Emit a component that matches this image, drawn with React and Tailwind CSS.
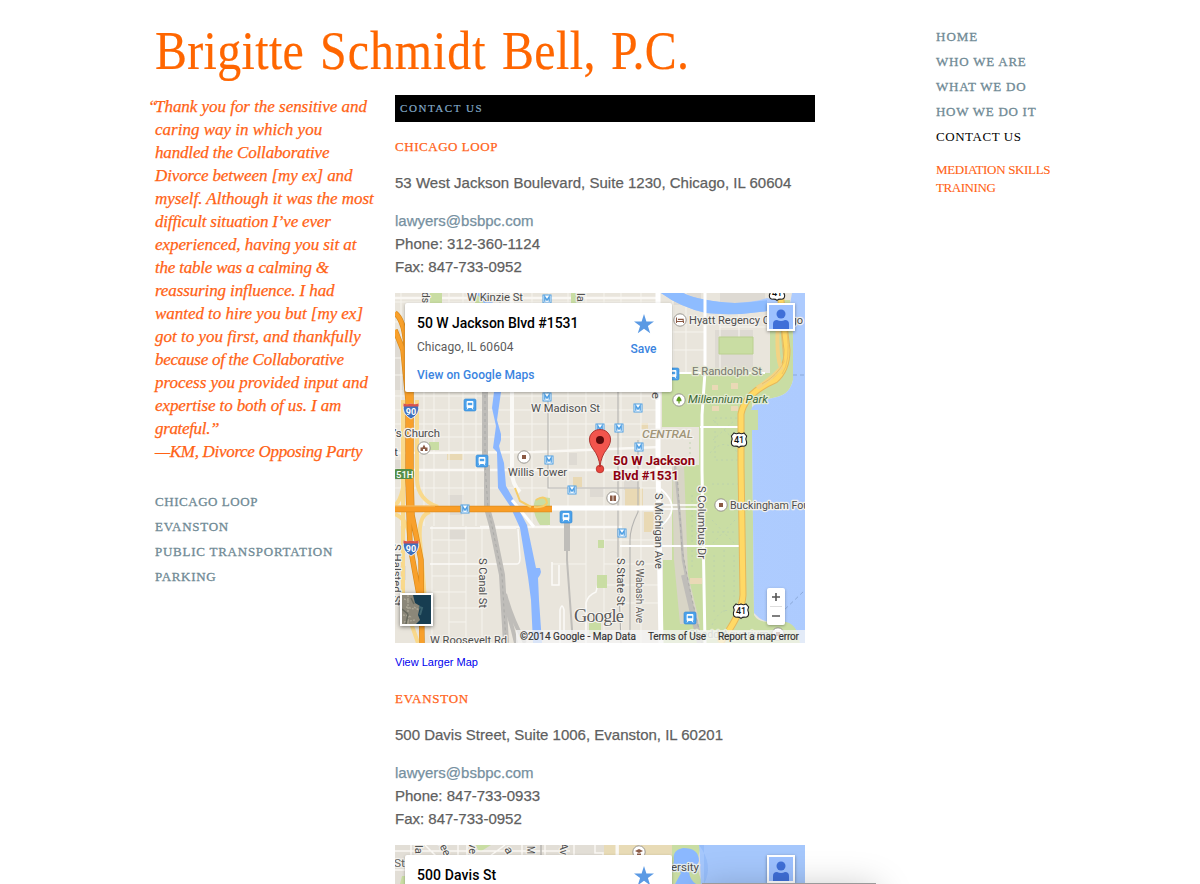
import React, { useLayoutEffect, useRef } from "react";

// Spreads the letters of one line so that it takes the given width.
function Fit({ w, className = "", children }) {
  const ref = useRef(null);
  useLayoutEffect(() => {
    const el = ref.current;
    el.style.letterSpacing = "0px";
    const natural = el.offsetWidth;
    el.style.letterSpacing = (w - natural) / (children.length - 1) + "px";
  }, [w, children]);
  return (
    <span ref={ref} className={"inline-block whitespace-nowrap [font-variant-ligatures:none] " + className}>
      {children}
    </span>
  );
}

const quote = [
  ["Thank you for the sensitive and", 212],
  ["caring way in which you", 167],
  ["handled the Collaborative", 174],
  ["Divorce between [my ex] and", 197],
  ["myself. Although it was the most", 219],
  ["difficult situation I’ve ever", 176],
  ["experienced, having you sit at", 201],
  ["the table was a calming &", 174],
  ["reassuring influence. I had", 180],
  ["wanted to hire you but [my ex]", 208],
  ["got to you first, and thankfully", 206],
  ["because of the Collaborative", 189],
  ["process you provided input and", 213],
  ["expertise to both of us. I am", 186],
  ["grateful.”", 65],
  ["—KM, Divorce Opposing Party", 208],
];

const SERIF = "font-['Liberation_Serif',serif]";

function Label({ x, y, w, children, size = 11, fill = "#4d4d4d", rotate, italic, bold, medium, halo = "#f3f1ec" }) {
  return (
    <text
      x={x}
      y={y}
      textLength={w}
      lengthAdjust="spacingAndGlyphs"
      fontFamily="Roboto, sans-serif"
      fontSize={size}
      fontStyle={italic ? "italic" : "normal"}
      fontWeight={bold ? 700 : medium ? 500 : 400}
      fill={fill}
      stroke={halo}
      strokeWidth="2.5"
      strokeLinejoin="round"
      paintOrder="stroke"
      transform={rotate ? `rotate(${rotate} ${x} ${y})` : undefined}
    >
      {children}
    </text>
  );
}

function Metro({ x, y }) {
  return (
    <g transform={`translate(${x} ${y})`}>
      <rect x="-4" y="-4" width="8" height="8" fill="#fff" stroke="#4f9fe2" strokeWidth="1" />
      <path d="M-2.2 2.700V-2.200L0 1.200 2.200-2.200V2.700" fill="none" stroke="#4f9fe2" strokeWidth="1.3" />
    </g>
  );
}

function Train({ x, y }) {
  return (
    <g transform={`translate(${x} ${y})`}>
      <rect x="-6" y="-6" width="12" height="12" rx="1.5" fill="#4ba1ea" stroke="#3488d4" strokeWidth=".6" />
      <rect x="-3.4" y="-4" width="6.8" height="7" rx="1" fill="#fff" />
      <rect x="-2.2" y="-2.2" width="4.4" height="2.4" fill="#4ba1ea" />
      <path d="M-3 4.4l1-1.4M3 4.4l-1-1.4" stroke="#fff" />
    </g>
  );
}

function Poi({ x, y, children }) {
  return (
    <g transform={`translate(${x} ${y})`}>
      <circle r="6.2" fill="#fff" stroke="#8f8b85" strokeWidth=".9" />
      {children || <rect x="-2" y="-2" width="4" height="4" fill="#8b5b46" />}
    </g>
  );
}

function Interstate({ x, y }) {
  return (
    <g transform={`translate(${x} ${y})`}>
      <path d="M-7.5-6.5Q-4-5 0-7 4-5 7.5-6.5 9.5 3 0 8-9.5 3-7.5-6.5Z" fill="#3f70bd" stroke="#fff" strokeWidth=".8" />
      <path d="M-7.5-7.5Q-4-6 0-7.5 4-6 7.5-7.5L7.6-4.6H-7.6Z" fill="#d9534c" />
      <text y="4" textAnchor="middle" fontFamily="Roboto, sans-serif" fontWeight="700" fontSize="9" fill="#fff">90</text>
    </g>
  );
}

function Route({ x, y }) {
  return (
    <g transform={`translate(${x} ${y})`}>
      <path d="M-5-7Q-2.5-5.6 0-7 2.5-5.6 5-7L7.6-4Q6-1 7.6 2 8 6 4 6.2 1.5 6 0 7.4-1.5 6-4 6.2-8 6-7.6 2-6-1-7.6-4Z" fill="#fff" stroke="#222" strokeWidth="1.1" />
      <text y="3.4" textAnchor="middle" fontFamily="Roboto, sans-serif" fontWeight="500" fontSize="9" fill="#111">41</text>
    </g>
  );
}

const minorX = [401, 424, 434, 449, 463, 476, 532, 549, 568, 586, 604, 621, 641];
const minorY = [302, 322, 340, 358, 375, 396, 410, 424, 437, 488];

function LoopMap() {
  return (
    <svg className="block" width="410" height="350" viewBox="395 293 410 350">
      <defs>
        <linearGradient id="lake" x1="0" x2="1" y1="0.5" y2="0.4">
          <stop offset="0" stopColor="#9dc1fd" />
          <stop offset=".5" stopColor="#aeccff" />
          <stop offset="1" stopColor="#adcbfe" />
        </linearGradient>
      </defs>
      <rect x="395" y="293" width="410" height="350" fill="#e9e5dc" />
      <g fill="#dedad3">
        <path d="M395 330h8v60h-8zM395 460h9v20h-9zM448 495h16v20h-16zM449 530h16v10h-16zM624 478h14v12h-14zM715 330h38v42h-38zM569 453h8v12h-8zM590 488h14v9h-14zM673 293h28v12h-28zM720 293h45v10h-45zM395 566h11v14h-11z" />
      </g>
      <path d="M447 454h16v6h-16zM573 477h9v10h-9zM641 423h7v6h-7zM625 488h18v18h-18zM644 512h13v20h-13z" fill="#e9d9b4" />
      <g stroke="#f6f4ee" strokeWidth="1" fill="none">
        {minorX.map((x) => <path key={x} d={`M${x} 293V526`} />)}
        {minorY.map((y) => <path key={y} d={`M395 ${y}H660`} />)}
        <path d="M449 526V643M466 526V643M432 526V643M482 526V643M586 526V643M604 526V643M621 526V643M641 526V643" />
        <path d="M432 540H466M432 553H466M432 576H482M432 592H466M432 608H482M449 622H466M604 540H660M604 564H660M604 585H660M625 603H660M552 564H586" />
        <path d="M673 293V372M686 293V372M720 312V372M739 312V340" />
        <path d="M660 332H705M660 350H705M720 327H770" />
      </g>
      <path d="M430 528H516M430 564H517Q520 564 520 558L518 529M552 562V585H559V565M560 643V610Q562 602 564 610V640M586 643V603Q588 595 596 592L600 576" fill="none" stroke="#fbfaf7" strokeWidth="1.5" />
      <path d="M395 453 535 452 660 447M395 470H742M480 527H622M395 298H660" stroke="#faf8f4" strokeWidth="2.4" fill="none" />
      <g stroke="#b5b4b1" strokeWidth="1.1" fill="none">
        <path d="M548 385V488H640M618 385V560L621 643M638 440V512Q630 528 630 540V640M500 293V380" />
      </g>

      <path d="M662 373H770V300H790Q795 340 793 380Q790 394 777 397L752 403V410H758V430H752L754 615Q760 625 775 620Q797 615 800 643H663V560H672V480H682V465H699V427H662Z" fill="#c9dda3" />
      <path d="M719 337H753V354H719Z" fill="#c9dda3" stroke="#bad08f" />
      <path d="M535 500Q539 496 550 498V525H540Q531 512 535 500ZM429 442h10v8h-10zM597 575h10v13h-10zM598 540h6v8h-6zM589 622h12v12h-12zM430 293h12v11h-12zM475 293h8v12h-8zM571 293h10v10h-10z" fill="#c9dda3" />
      <path d="M672 465H684L688 575 700 624H680L674 560Z" fill="#d8d5c6" />
      <g fill="#ead9b6"><path d="M712 385h6v5h-6zM731 383h7v6h-7zM712 406h7v5h-7zM731 406h7v5h-7zM690 578h12v6h-12z" /></g>
      <g fill="none" stroke="#bbd1ad" strokeDasharray="2 3" strokeWidth=".9">
        <path d="M713 440 735 420M713 420 735 440M710 453Q724 436 738 453M712 520 735 544M735 520 712 544M712 532H736M712 625Q724 600 738 618M712 484H738M724 550V615M690 432V460M692 495V570M714 555V615M734 555V615M715 418H738V460H715Z" />
      </g>

      <path d="M805 293V643H800Q797 620 780 622 764 625 754 613L752 430H758V410H751Q752 402 777 397 790 394 793 380V330L789 308 767 311Q735 316 706 313 680 307 661 293H683Q700 301 735 303 755 302 767 298L790 304 792 293Z" fill="url(#lake)" />
      <path d="M661 293H683Q700 301 735 303 755 302 767 300V311Q735 316 706 313 680 307 661 293Z" fill="#8ebcff" />
      <path d="M780 614 805 590M793 375H805" stroke="#8ba9d8" strokeDasharray="4 3" />
      <path d="M474 293Q485 298 489 320L494 392 492 408 496 426 493 448 497 452 498 488 510 506 520 528 528 577 531 600 533 643H542L539 600 538 578 540 575 541 572 540 568 536 568 527 525 515 502 506 486 504 463 500 450 499 446 501 440V434L497 420 501 392 497 315 489 293Z" fill="#8ab6ff" />

      <g fill="none" stroke="#fff">
        <path d="M512 293V472Q512 484 520 492" strokeWidth="4" stroke="#faf9f6" />
        <path d="M658 293V465L661 643" strokeWidth="5" />
        <path d="M705 293V372L702 415V470L705 643" strokeWidth="3" />
        <path d="M660 373H765M700 427H740M620 546H743" strokeWidth="2" />
        <path d="M660 505H702M660 509H705" strokeWidth="1.5" />
        <path d="M552 508H660" strokeWidth="5" />
        <path d="M661 489Q683 508 661 526" strokeWidth="1.7" />
        <path d="M512 500 534 527" strokeWidth="3" />
      </g>
      <g fill="none" stroke="#bfbdb9">
        <path d="M485 392V465M487 465V508L492 526 502 575 506 643" strokeWidth="6" />
        <path d="M505 594Q512 620 525 643M504 600Q512 625 516 643" strokeWidth="4" />
        <path d="M567 526V560L573 643" strokeWidth="2" />
        <path d="M567 523V551" strokeWidth="6" />
        <path d="M675 465 681 530 683 560 691 600 702 643" strokeWidth="2.5" />
        <path d="M683 575 699 643" strokeWidth="4" />
      </g>
      <path d="M485 395V465L488 508 492 526 502 575 506 643M677 470 682 550 690 590 702 643" fill="none" stroke="#a5a4a2" strokeWidth=".8" strokeDasharray="3 3" />

      <g fill="none">
        <path d="M403 400V600L418 643M417 400V480Q418 500 438 507M404 480Q402 500 395 505M395 514Q410 520 410 545M430 512Q418 515 420 540L425 600" stroke="#f9d98c" strokeWidth="4" />
        <path d="M395 313Q404 320 406 345L411 390V480L412 515 421 560 422 643M395 330 403 350 408 400V480L410 545 420 600" stroke="#d98a1b" strokeWidth="5.5" />
        <path d="M395 313Q404 320 406 345L411 390V480L412 515 421 560 422 643M395 330 403 350 408 400V480L410 545 420 600" stroke="#f8a02b" strokeWidth="4.2" />
        <path d="M395 509H552" stroke="#df8d1e" strokeWidth="6.5" />
        <path d="M395 509H552" stroke="#f99d26" strokeWidth="5" />
        <path d="M395 506H435" stroke="#fbc36b" />
        <path d="M515 488 520 501 531 507M536 500Q546 494 547 503 544 508 534 507" stroke="#f6cd69" strokeWidth="2" />
        <path d="M780 293 784 325 787 350Q787 370 775 380 745 393 741 414V465L743 595Q742 614 720 643" stroke="#e6b85a" strokeWidth="7" />
        <path d="M780 293 784 325 787 350Q787 370 775 380 745 393 741 414V465L743 595Q742 614 720 643" stroke="#ffd965" strokeWidth="5" />
        <path d="M778 325Q776 355 781 368 770 380 757 388" stroke="#f3d384" strokeWidth="4" />
        <path d="M781 330 784 362Q777 376 762 384M787 330Q791 362 782 374" stroke="#e5bd68" strokeWidth=".8" />
      </g>

      {[[547, 299], [547, 397], [638, 408], [619, 428], [600, 428], [639, 447], [549, 460], [572, 490], [465, 509], [622, 533]].map(([x, y]) => <Metro key={x + "-" + y} x={x} y={y} />)}
      {[[470, 405], [482, 461], [566, 517], [690, 618], [673, 374]].map(([x, y]) => <Train key={x} x={x} y={y} />)}
      <Interstate x={411} y={411} />
      <Interstate x={411} y={548} />
      <Route x={777} y={293} />
      <Route x={739} y={440} />
      <Route x={741} y={611} />
      <rect x="393" y="469" width="21" height="10" rx="4" fill="#568f48" />
      <text x="396" y="477.5" fontFamily="Roboto, sans-serif" fontWeight="500" fontSize="9.500" fill="#fff">51H</text>

      <Label x={467} y={301} w={56}>W Kinzie St</Label>
      <Label x={422} y={292} w={11} rotate={90}>ds</Label>
      <Label x={577} y={293} w={9} rotate={90}>la</Label>
      <Label x={652} y={392} w={7} rotate={90}>e</Label>
      <Label x={531} y={412} w={69}>W Madison St</Label>
      <Label x={394} y={437} w={46}>’s Church</Label>
      <Label x={394} y={456} w={4}>t</Label>
      <Label x={508} y={476} w={59}>Willis Tower</Label>
      <Label x={642} y={438} w={51} italic medium fill="#a09578" size={10}>CENTRAL</Label>
      <Label x={692} y={375} w={70} fill="#77786f" halo="#e4e6d2">E Randolph St</Label>
      <Label x={688} y={403} w={80} italic fill="#3d6837" halo="#e4ecd2">Millennium Park</Label>
      <Label x={689} y={324} w={114}>Hyatt Regency Chicago</Label>
      <Label x={730} y={509} w={85}>Buckingham Foun</Label>
      <Label x={479} y={558} w={50} rotate={90}>S Canal St</Label>
      <Label x={617} y={558} w={48} rotate={90}>S State St</Label>
      <Label x={636} y={560} w={63} size={10} fill="#66635e" rotate={90}>S Wabash Ave</Label>
      <Label x={655} y={493} w={76} rotate={90}>S Michigan Ave</Label>
      <Label x={698} y={486} w={73} rotate={90}>S Columbus Dr</Label>
      <Label x={393} y={544} w={62} size={10} rotate={90}>S Halsted St</Label>
      <Label x={430} y={644} w={77}>W Roosevelt Rd</Label>
      <Label x={689} y={638} w={80} fill="#8b9186" halo="#e4ecd2">Shedd Aquarium</Label>

      <Poi x={424} y={448}><path d="M-3.5 3V-.5H-1.5L0-3.5 1.5-.5H3.5V3H1V1H-1V3Z" fill="#8b5b46" /></Poi>
      <Poi x={524} y={457} />
      <Poi x={613} y={498}><path d="M-3-2.5H-.4V3H-3ZM.4-2.5H3V3H.4Z" fill="#8b5b46" /></Poi>
      <Poi x={721} y={505} />
      <Poi x={778} y={634} />
      <Poi x={680} y={320}><path d="M-3.5-2.5V3M-3.5 1.5H3.5V3M-2-.6H3.2V1" fill="none" stroke="#8b5b46" strokeWidth="1.1" /></Poi>
      <Poi x={679} y={400}><path d="M0-3.8Q3-1 2.4 1.2H.6V3.6H-.6V1.2H-2.4Q-3-1 0-3.8Z" fill="#5f9b20" /></Poi>

      <Label x={613} y={465} w={82} size={12} bold fill="#8d0010">50 W Jackson</Label>
      <Label x={613} y={480} w={66} size={12} bold fill="#8d0010">Blvd #1531</Label>
      <circle cx="600" cy="469" r="3.8" fill="#e8453c" stroke="#b32b26" strokeWidth=".8" />
      <path d="M600 467Q599 456 593 449 588 442 590 436 593 429.500 600 429.500 607 429.500 610 436 612 442 607 449 601 456 600 467Z" fill="#f2554d" stroke="#a82b27" strokeWidth=".9" />
      <circle cx="600" cy="440" r="4" fill="#5c0b0c" />

      <text x="574" y="622" textLength="50" fontFamily="Liberation Serif, serif" fontSize="18.5" fill="#5c5c5c" stroke="#f7f5f1" strokeWidth="2" paintOrder="stroke">Google</text>
      <rect x="516" y="630" width="289" height="13" fill="#f5f5f5" opacity=".74" />
      <g fontFamily="Roboto, sans-serif" fontSize="10" fill="#333" stroke="#333" strokeWidth=".15">
        <text x="520" y="640" textLength="116">©2014 Google - Map Data</text>
        <text x="648" y="640" textLength="58">Terms of Use</text>
        <text x="718" y="640" textLength="81">Report a map error</text>
      </g>
    </svg>
  );
}

function EvanstonMap() {
  return (
    <svg className="block" width="410" height="350" viewBox="395 845 410 350">
      <rect x="395" y="845" width="410" height="350" fill="#e2ded6" />
      <path d="M604 845H675V1195H604Z" fill="#e8dbb6" />
      <path d="M672 845H702Q693 865 703 884V1195H672ZM476 845H491L483 850Q479 854 476 845ZM402 876H408V884H400Z" fill="#c9dda3" />
      <g stroke="#faf8f4" strokeWidth="1.5" fill="none">
        <path d="M411 845V884M425 845 440 860M458 845V860M467 845V860M490 856 505 845M522 845V860M545 845V860M574 845V860M595 845V853H603V860M395 851H570M618 845V860M640 845V856M395 870H405" />
        <path d="M617 845V860" strokeWidth="3" />
      </g>
      <path d="M541 845V860" stroke="#b7b5b1" strokeWidth="1.5" />
      <path d="M674 860Q672 850 683 848 699 848 699 861 696 869 689 872 690 880 696 884H675L681 873 673 866Z" fill="#8bb8ff" />
      <path d="M699 845H805V1195H702Q703 880 699 845Z" fill="#a5c7fc" />
      <path d="M699 845Q714 865 704 884V845Z" fill="#96bdf9" />
      <Poi x={639} y={852}><path d="M-4-1 0-3 4-1 0 1ZM-2 1.5H2V3H-2Z" fill="#8b5b46" /></Poi>
      <Label x={394} y={867} w={11} fill="#65655f">St</Label>
      <Label x={671} y={871} w={28} halo="#e6edf0">ersity</Label>
      <Label x={415} y={845} w={9} rotate={90}>la</Label>
      <Label x={438} y={843} w={15} rotate={65}>ree</Label>
      <Label x={469} y={843} w={11} rotate={90}>ve</Label>
      <Label x={504} y={849} w={7} rotate={60}>a</Label>
      <Label x={527} y={846} w={8} rotate={90}>M</Label>
      <Label x={560} y={843} w={12} rotate={90}>Av</Label>
    </svg>
  );
}

function MapFrame({ title, city, controls, children }) {
  return (
    <div className="relative mt-[15px] h-[350px] w-[410px] overflow-hidden font-['Roboto',sans-serif]">
      {children}
      <div className="absolute left-[10px] top-[10px] flex h-[89px] w-[267px] justify-between rounded-[2px] bg-white pl-3 shadow-[0_1px_3px_rgba(0,0,0,0.3)]">
        <div className="pt-[10px]">
          <div className="text-[14px] font-medium leading-5 text-black">{title}</div>
          <div className="mt-1 text-[12px] leading-5 text-[#5b5b5b]">{city}</div>
          <div className="mt-2 text-[12px] font-medium leading-5 text-[#3a84df]"><Fit w={118}>View on Google Maps</Fit></div>
        </div>
        <div className="flex w-[57px] flex-col items-center pt-[10px]">
          <svg width="22" height="22" viewBox="0 0 22 22"><path d="M11 1 13.400 8.400H21L14.900 13 17.200 20.300 11 15.800 4.800 20.300 7.100 13 1 8.400H8.600Z" fill="#5b9ae4" /></svg>
          <div className="mt-[6px] text-[12px] font-medium leading-4 text-[#3a84df]">Save</div>
        </div>
      </div>
      <div className="absolute left-[372px] top-[10px] h-7 w-7 border-2 border-white bg-[#9dc1ff] shadow-[0_1px_3px_rgba(0,0,0,0.4)]">
        <svg width="24" height="24" viewBox="0 0 24 24"><circle cx="12" cy="9" r="4.500" fill="#3f6fd8" /><path d="M4 24V19Q4 15 8 15 12 17 16 15 20 15 20 19V24Z" fill="#3f6fd8" /></svg>
      </div>
      {controls && (
        <>
          <div className="absolute left-[372px] top-[295px] flex h-[37px] w-[18px] flex-col rounded-[2px] bg-white shadow-[0_1px_3px_rgba(0,0,0,0.3)]">
            <svg width="18" height="37" viewBox="0 0 18 37"><path d="M5 9H13M9 5V13M5 28H13" stroke="#555" strokeWidth="1.6" /><path d="M3 18.500H15" stroke="#ddd" /></svg>
          </div>
          <div className="absolute left-[5px] top-[300px] h-[33px] w-[33px] border-2 border-white bg-[#173d51] shadow-[0_1px_4px_rgba(0,0,0,0.5)]">
            <svg width="29" height="29" viewBox="0 0 29 29">
              <path d="M0 0H11L13 8 18 11 16 20 18 25 14 29H0Z" fill="#8b8779" />
              <path d="M2 4 8 6M4 12 12 14M1 20 10 22M6 0V29M12 12 17 15M2 27 13 25" stroke="#aaa696" strokeWidth="1.4" strokeDasharray="2 1" />
              <path d="M0 14 6 19 4 29M9 3 12 9" stroke="#67695d" fill="none" strokeWidth="1.5" />
              <path d="M17 12 20 13 18 20" stroke="#3b6470" fill="none" strokeWidth="2" />
            </svg>
          </div>
        </>
      )}
    </div>
  );
}

function Office({ name, nameW, address, addressW, phone, children }) {
  return (
    <section className="text-[15px] leading-[23px] text-[#5f5f5f] [-webkit-text-stroke:0.25px]">
      <h2 className={"mt-[13px] text-[13px] leading-[23px] text-[#ff6319] " + SERIF}><Fit w={nameW}>{name}</Fit></h2>
      <p className="mt-[13px]"><Fit w={addressW}>{address}</Fit></p>
      <div className="mt-[15px] flex flex-col items-start">
        <a className="text-[#76909f]"><Fit w={139}>lawyers@bsbpc.com</Fit></a>
        <Fit w={145}>{phone}</Fit>
        <Fit w={127}>Fax: 847-733-0952</Fit>
      </div>
      <div className="[-webkit-text-stroke:0]">{children}</div>
    </section>
  );
}

export default function App() {
  return (
    <div className="relative h-[884px] w-[1200px] overflow-hidden bg-white font-['Liberation_Sans',sans-serif]">
      <div className="flex pl-[155px]">
        <div className="w-[660px]">
          <h1 className={"flex h-[95px] items-start pt-[19px] text-[55px] leading-[64px] text-[#ff6600] [-webkit-text-stroke:0.2px] " + SERIF}>
            <span className="w-[165px] shrink-0"><Fit w={171} className="origin-left scale-x-[0.87]">Brigitte</Fit></span>
            <span className="w-[182px] shrink-0"><Fit w={190} className="origin-left scale-x-[0.87]">Schmidt</Fit></span>
            <span className="w-[109px] shrink-0"><Fit w={107} className="origin-left scale-x-[0.87]">Bell,</Fit></span>
            <span className="w-[80px] shrink-0"><Fit w={90} className="origin-left scale-x-[0.87]">P.C.</Fit></span>
          </h1>
          <div className="flex">
            <aside className={"w-[240px] shrink-0 " + SERIF}>
              <div className="relative flex flex-col items-start text-[17px] italic leading-[23px] text-[#ff6214] [-webkit-text-stroke:0.25px]">
                <span className="absolute -left-[7px] top-0">“</span>
                {quote.map(([t, w]) => <Fit key={t} w={w}>{t}</Fit>)}
              </div>
              <nav className="mt-[26px] flex flex-col items-start text-[13px] leading-[25px] text-[#708a95] [-webkit-text-stroke:0.3px]">
                <Fit w={102}>CHICAGO LOOP</Fit>
                <Fit w={73}>EVANSTON</Fit>
                <Fit w={177}>PUBLIC TRANSPORTATION</Fit>
                <Fit w={61}>PARKING</Fit>
              </nav>
            </aside>
            <main className="w-[420px] shrink-0">
              <div className={"h-[27px] bg-black pl-[5px] text-[11px] leading-[27px] text-[#83aac8] [-webkit-text-stroke:0.2px] " + SERIF}><Fit w={82}>CONTACT US</Fit></div>
              <Office name="CHICAGO LOOP" nameW={102} address="53 West Jackson Boulevard, Suite 1230, Chicago, IL 60604" addressW={396} phone="Phone: 312-360-1124">
                <MapFrame title={<Fit w={161}>50 W Jackson Blvd #1531</Fit>} city={<Fit w={97}>Chicago, IL 60604</Fit>} controls><LoopMap /></MapFrame>
                <a className="mt-2 block text-[11px] leading-[23px] text-[#0000ee]"><Fit w={83}>View Larger Map</Fit></a>
              </Office>
              <Office name="EVANSTON" nameW={73} address="500 Davis Street, Suite 1006, Evanston, IL 60201" addressW={328} phone="Phone: 847-733-0933">
                <MapFrame title={<Fit w={79}>500 Davis St</Fit>} city="Evanston, IL 60201"><EvanstonMap /></MapFrame>
              </Office>
            </main>
          </div>
        </div>
        <nav className={"ml-[121px] flex flex-col items-start pt-6 text-[13px] leading-[25px] text-[#708a95] [-webkit-text-stroke:0.3px] " + SERIF}>
          <Fit w={41}>HOME</Fit>
          <Fit w={90}>WHO WE ARE</Fit>
          <Fit w={90}>WHAT WE DO</Fit>
          <Fit w={100}>HOW WE DO IT</Fit>
          <Fit w={85} className="text-black [-webkit-text-stroke:0]">CONTACT US</Fit>
          <div className="mt-3 flex flex-col items-start leading-[18px] text-[#ff6214] [-webkit-text-stroke:0.1px]">
            <Fit w={115}>MEDIATION SKILLS</Fit>
            <Fit w={60}>TRAINING</Fit>
          </div>
        </nav>
      </div>
      <div className="absolute left-[702px] top-[883px] h-10 w-[174px] bg-[#9a9a9a] shadow-[0_6px_36px_rgba(0,0,0,0.25)]" />
    </div>
  );
}
